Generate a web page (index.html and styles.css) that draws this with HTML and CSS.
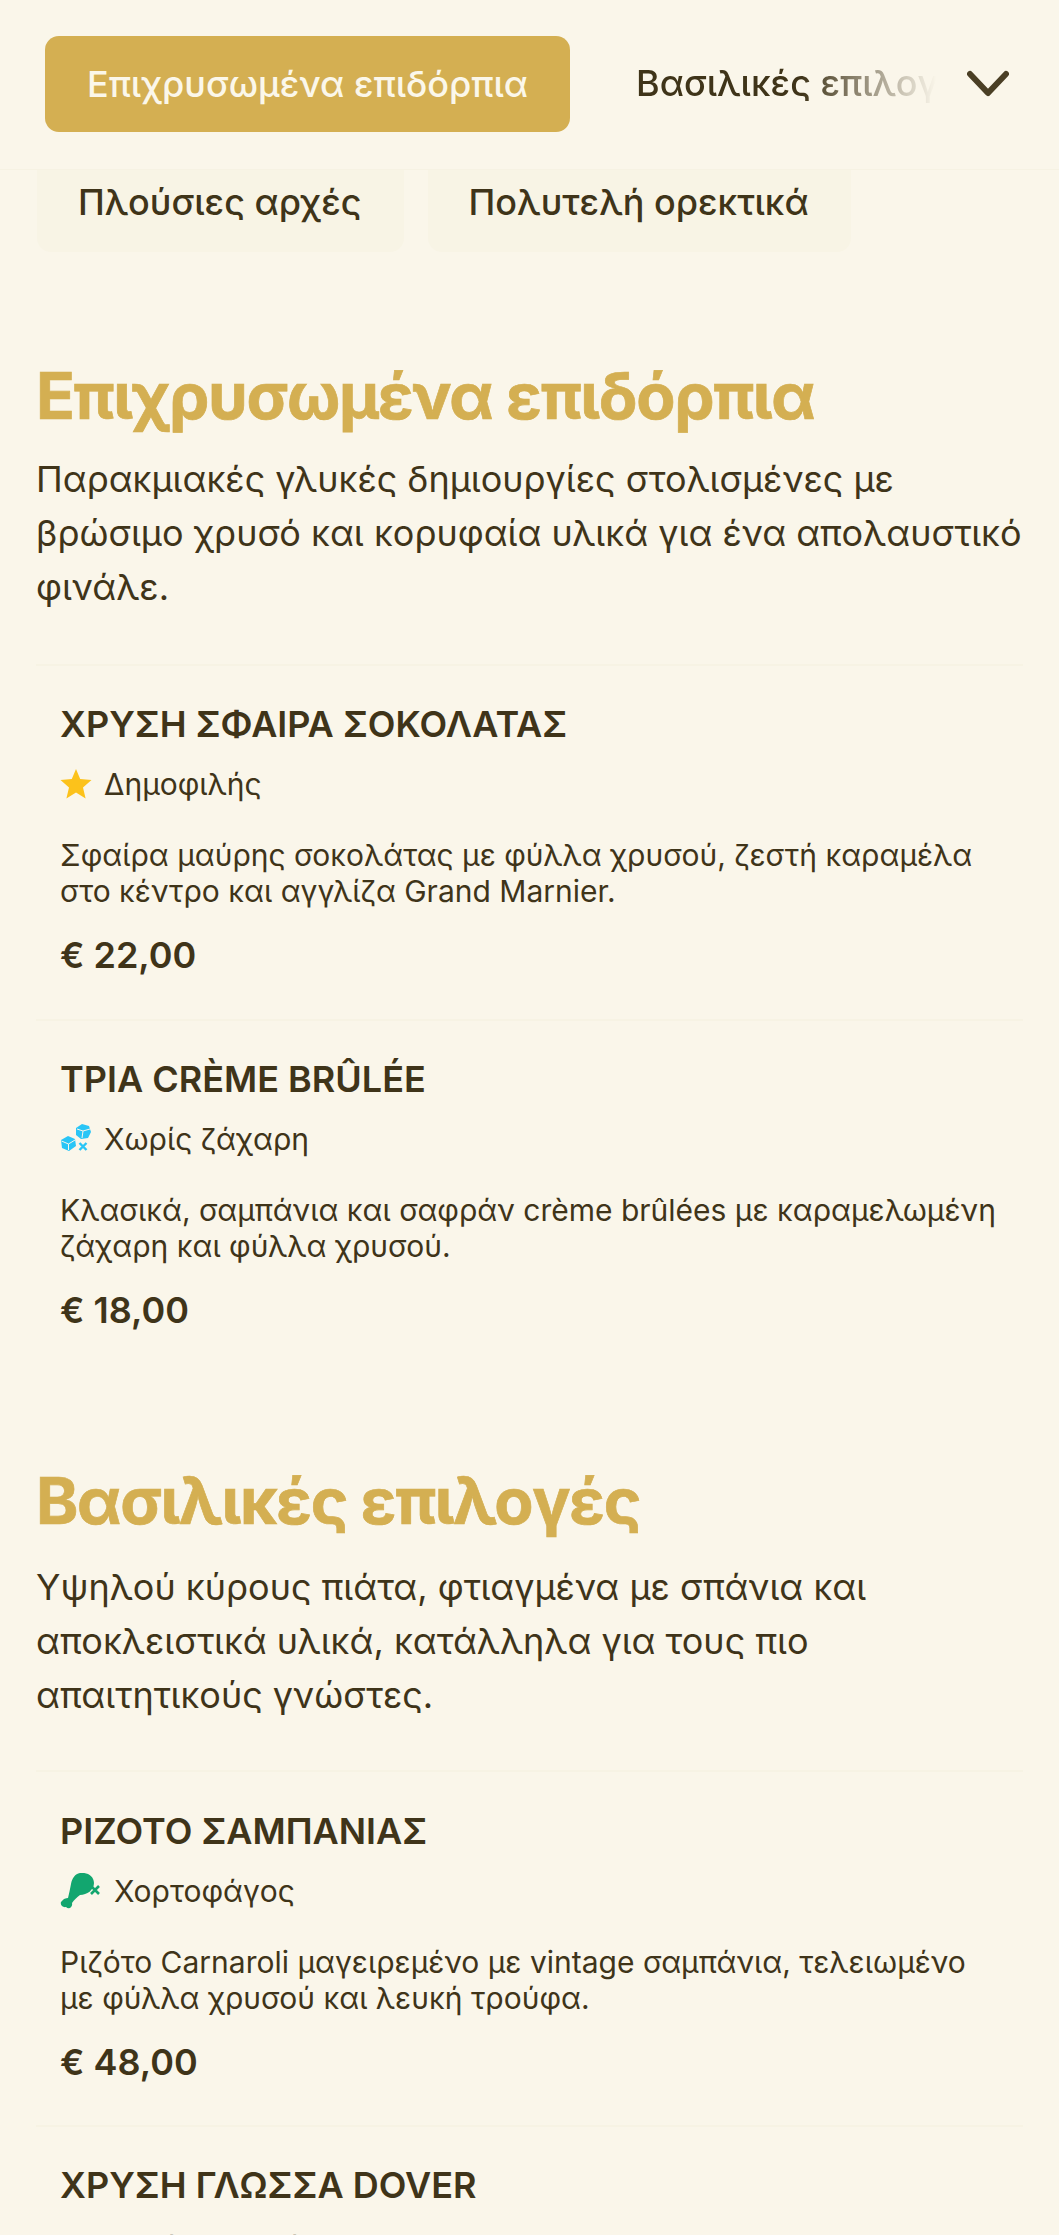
FILE: index.html
```html
<!DOCTYPE html>
<html lang="el">
<head>
<meta charset="utf-8">
<title>Μενού</title>
<link rel="stylesheet" href="styles.css">
</head>
<body>
<header class="topbar">
  <button class="tab tab-active">Επιχρυσωμένα επιδόρπια</button>
  <div class="tab-fade"><span class="tab-next">Βασιλικές επιλογές</span></div>
  <svg class="chevron" viewBox="0 0 42 28" width="42" height="28"><path d="M3 4 L21 23 L39 4" fill="none" stroke="#4a3f25" stroke-width="6" stroke-linecap="round" stroke-linejoin="round"/></svg>
</header>
<nav class="chips">
  <span class="chip">Πλούσιες αρχές</span>
  <span class="chip">Πολυτελή ορεκτικά</span>
</nav>
<main class="content">
  <section class="section">
    <h2 class="section-title">Επιχρυσωμένα επιδόρπια</h2>
    <p class="section-desc">Παρακμιακές γλυκές δημιουργίες στολισμένες με βρώσιμο χρυσό και κορυφαία υλικά για ένα απολαυστικό φινάλε.</p>
    <article class="item">
      <h3 class="item-title">ΧΡΥΣΗ ΣΦΑΙΡΑ ΣΟΚΟΛΑΤΑΣ</h3>
      <div class="tag">
        <svg class="tag-icon" viewBox="0 0 32 32" width="32" height="32"><path d="M16 1 L20.200 11 L31.500 12 L23 19.400 L25.600 30.500 L16 24.600 L6.400 30.500 L9 19.400 L0.500 12 L11.800 11 Z" fill="#fcc21b"/></svg>
        <span>Δημοφιλής</span>
      </div>
      <p class="item-desc">Σφαίρα μαύρης σοκολάτας με φύλλα χρυσού, ζεστή καραμέλα στο κέντρο και αγγλίζα Grand Marnier.</p>
      <div class="price">€ 22,00</div>
    </article>
    <article class="item">
      <h3 class="item-title">ΤΡΙΑ CRÈME BRÛLÉE</h3>
      <div class="tag">
        <svg class="tag-icon" viewBox="0 0 32 32" width="32" height="32"><path d="M16 5 L22 1 L29 3 L31 9 L28 15 L21 16 L16 12 Z M1 17 L8 13 L15 16 L16 23 L9 28 L2 25 Z" fill="#29c5f6"/><path d="M17 6 L23 8 L30 6 M23 8 L22 15 M1.500 18 L8.500 21 L15 17 M8.500 21 L8.500 27" stroke="#faf6ea" stroke-width="1" fill="none"/><path d="M19.500 20 L26.500 27 M26.500 20 L19.500 27" stroke="#29c5f6" stroke-width="2.400"/></svg>
        <span>Χωρίς ζάχαρη</span>
      </div>
      <p class="item-desc">Κλασικά, σαμπάνια και σαφράν crème brûlées με καραμελωμένη ζάχαρη και φύλλα χρυσού.</p>
      <div class="price">€ 18,00</div>
    </article>
  </section>
  <section class="section section-next">
    <h2 class="section-title">Βασιλικές επιλογές</h2>
    <p class="section-desc">Υψηλού κύρους πιάτα, φτιαγμένα με σπάνια και αποκλειστικά υλικά, κατάλληλα για τους πιο απαιτητικούς γνώστες.</p>
    <article class="item">
      <h3 class="item-title">ΡΙΖΟΤΟ ΣΑΜΠΑΝΙΑΣ</h3>
      <div class="tag">
        <svg class="tag-icon" viewBox="0 0 42 36" width="42" height="36"><path d="M20 0 C27 -1 34 3 34 10 C34 17 27 22 20 22 C17 24 14 27 12 30 C13 34 9 37 6 34 C2 35 -1 30 2 28 C3 26 6 25 8 25 C9 21 10 16 11 11 C12 5 15 1 20 0 Z" fill="#12a66f"/><path d="M31 13 L39 21 M39 13 L31 21" stroke="#12a66f" stroke-width="2.600"/></svg>
        <span>Χορτοφάγος</span>
      </div>
      <p class="item-desc">Ριζότο Carnaroli μαγειρεμένο με vintage σαμπάνια, τελειωμένο με φύλλα χρυσού και λευκή τρούφα.</p>
      <div class="price">€ 48,00</div>
    </article>
    <article class="item item-last">
      <h3 class="item-title">ΧΡΥΣΗ ΓΛΩΣΣΑ DOVER</h3>
      <div class="tag">
        <svg class="tag-icon" viewBox="0 0 32 32" width="32" height="32"><circle cx="16" cy="18" r="12" fill="#d4af52"/></svg>
        <span>Χωρίς γλουτένη</span>
      </div>
    </article>
  </section>
</main>
</body>
</html>
```
FILE: styles.css
```css
* { box-sizing: border-box; }
html, body { margin: 0; padding: 0; }
body {
  width: 1059px;
  height: 2235px;
  overflow: hidden;
  background: #faf6ea;
  color: #3f3419;
  font-family: Inter, "Noto Sans", sans-serif;
}
.topbar {
  height: 170px;
  padding: 36px 50px 0 45px;
  display: flex;
  align-items: flex-start;
  border-bottom: 1px solid #f6f2e3;
}
.tab {
  width: 525px;
  height: 96px;
  flex: none;
  border: 0;
  border-radius: 14px;
  background: #d4af52;
  color: #fbf7ea;
  font: 500 36px Inter, sans-serif;
}
.tab-fade {
  margin-left: 66px;
  width: 300px;
  height: 96px;
  line-height: 94px;
  overflow: hidden;
  white-space: nowrap;
  font-size: 36px;
  font-weight: 500;
  -webkit-mask-image: linear-gradient(to right, #000 55%, transparent 100%);
  mask-image: linear-gradient(to right, #000 55%, transparent 100%);
}
.chevron { margin: 34px 0 0 31px; flex: none; }
.chips {
  display: flex;
  gap: 24px;
  padding-left: 37px;
  height: 82px;
}
.chip {
  height: 82px;
  border-radius: 0 0 14px 14px;
  background: #f8f4e5;
  font-size: 36px;
  font-weight: 500;
  line-height: 64px;
  padding: 0 42px 0 41px;
}
.content { padding: 0 36px; }
.section-title {
  margin: 0;
  padding-top: 105px;
  font-size: 64px;
  line-height: 78px;
  font-weight: 700;
  letter-spacing: -0.02em;
  -webkit-text-stroke: 0.7px #d4af52;
  color: #d4af52;
}
.section-desc {
  margin: 17px -12px 0 0;
  font-size: 36px;
  line-height: 54px;
}
.section-next .section-title { padding-top: 88px; }
.section-next .section-desc { margin-top: 20px; }
.section-next .item { margin-top: 48px; padding-top: 35px; }
.section-next .item-last { margin-top: 0; padding-top: 34px; }
.item {
  margin-top: 50px;
  padding: 34px 24px 0;
  border-top: 2px solid #f7f3e4;
  height: 355px;
}
.item + .item { margin-top: 0; }
.item-title {
  margin: 0;
  font-size: 36px;
  line-height: 48px;
  font-weight: 600;
}
.tag {
  display: flex;
  align-items: center;
  gap: 12px;
  margin-top: 16px;
  font-size: 30px;
  line-height: 40px;
}
.item-last .tag { margin-top: 18px; }
.tag-icon { flex: none; }
.item-desc {
  margin: 33px 0 0;
  font-size: 30px;
  line-height: 36px;
}
.price {
  margin-top: 24px;
  font-size: 36px;
  line-height: 44px;
  font-weight: 600;
}
```
